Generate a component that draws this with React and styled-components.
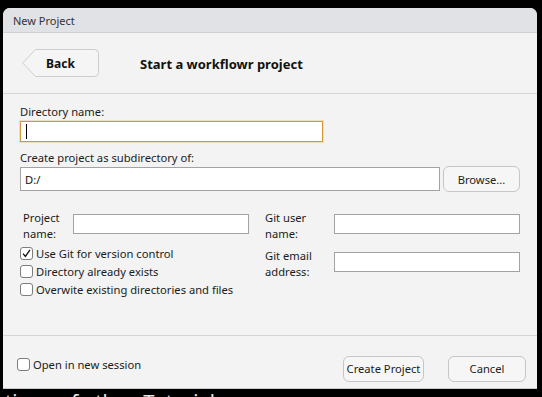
import styled, { createGlobalStyle } from 'styled-components';

const FONT = `"Segoe UI", "Noto Sans", "Liberation Sans", sans-serif`;
const TEXT = '11.2px';

const GlobalStyle = createGlobalStyle`
  html, body {
    margin: 0;
    padding: 0;
    background: #000;
  }
  body {
    font-family: ${FONT};
    overflow: hidden;
  }
`;

const Page = styled.div`
  width: 542px;
  height: 397px;
  padding: 8px 5px 0 3px;
  box-sizing: border-box;
  overflow: hidden;
`;

const Dialog = styled.div`
  width: 534px;
  height: 381px;
  background: #f2f3f2;
  border-radius: 7px 7px 0 0;
  overflow: hidden;
  display: flex;
  flex-direction: column;
  box-sizing: border-box;
  border-bottom: 1px solid #c9c9c9;
`;

const TitleBar = styled.div`
  height: 24px;
  flex: none;
  background: #e1e2e6;
  border-bottom: 1px solid #cfd0d3;
  display: flex;
  align-items: center;
  padding-left: 10px;
  font-size: 11px;
  color: #333;
`;

const Header = styled.div`
  height: 61px;
  flex: none;
  display: flex;
  align-items: center;
  padding-left: 19px;
  border-bottom: 1px solid #d4d4d4;
  box-sizing: border-box;
`;

const BackButton = styled.button`
  position: relative;
  width: 77px;
  height: 28px;
  padding: 0;
  margin: 0 41px 0 0;
  border: 0;
  background: none;
  font-family: ${FONT};
  font-size: 12px;
  font-weight: 700;
  color: #111;
  cursor: pointer;

  svg {
    position: absolute;
    inset: 0;
  }
  span {
    position: relative;
  }
`;

const Heading = styled.h1`
  margin: 2px 0 0;
  font-size: 13px;
  font-weight: 700;
  color: #111;
`;

const Body = styled.div`
  flex: 1;
  padding: 10px 17px 0;
  border-bottom: 1px solid #d4d4d4;
  display: flex;
  flex-direction: column;
`;

const Label = styled.label`
  display: block;
  font-size: ${TEXT};
  line-height: 16px;
  color: #1b1b1b;
`;

const TextBox = styled.div`
  box-sizing: border-box;
  height: ${({ h }) => h || 21}px;
  width: ${({ w }) => (w ? `${w}px` : 'auto')};
  flex: ${({ w }) => (w ? 'none' : 1)};
  background: #fff;
  border: 1px solid ${({ focused }) => (focused ? '#d39a3a' : '#a3a3a3')};
  box-shadow: ${({ focused }) => (focused ? '0 0 0 1px rgba(211,154,58,0.25)' : 'none')};
  display: flex;
  align-items: center;
  padding-left: 4px;
  font-size: ${TEXT};
  color: #111;
`;

const Caret = styled.span`
  width: 1px;
  height: 15px;
  background: #000;
  margin-left: 1px;
`;

const DirRow = styled.div`
  margin-top: 1px;
  margin-bottom: 8px;
  width: 303px;
`;

const PathRow = styled.div`
  display: flex;
  align-items: center;
  gap: 3px;
`;

const PushButton = styled.button`
  box-sizing: border-box;
  height: 26px;
  width: ${({ w }) => w}px;
  flex: none;
  border: 1px solid #c6c6c6;
  border-radius: 6px;
  background: #f6f6f6;
  font-family: ${FONT};
  font-size: ${TEXT};
  color: #222;
  padding: 0;
  white-space: nowrap;
`;

const Columns = styled.div`
  display: grid;
  grid-template-columns: 229px 255px;
  column-gap: 16px;
  margin-top: 18px;
`;

const Stack = styled.div`
  display: flex;
  flex-direction: column;
  gap: ${({ gap }) => gap || 0}px;
`;

const FieldRow = styled.div`
  display: flex;
  align-items: flex-start;
`;

const FieldLabel = styled.div`
  width: ${({ w }) => w}px;
  flex: none;
  font-size: ${TEXT};
  line-height: 16px;
  color: #1b1b1b;
  padding-left: ${({ indent }) => indent || 0}px;
  box-sizing: border-box;
`;

const FieldInput = styled(TextBox)`
  margin-top: 4px;
  height: 20px;
`;

const Checks = styled.div`
  display: flex;
  flex-direction: column;
  margin-top: 2px;
`;

const CheckRow = styled.label`
  display: flex;
  align-items: center;
  height: 18px;
  font-size: ${TEXT};
  color: #1b1b1b;
  gap: 3px;
  margin-bottom: ${({ mb }) => mb || 0}px;
  white-space: nowrap;
`;

const Box = styled.span`
  box-sizing: border-box;
  width: 13px;
  height: 13px;
  border: 1px solid #7d7d7d;
  border-radius: 3px;
  background: #fff;
  display: flex;
  align-items: center;
  justify-content: center;
  flex: none;
`;

const Footer = styled.div`
  height: 52px;
  flex: none;
  display: flex;
  align-items: center;
  padding: 13px 11px 0 14px;
  box-sizing: border-box;
`;

const Spacer = styled.div`
  flex: 1;
`;

const Buttons = styled.div`
  display: flex;
  gap: 24px;
`;

const BackdropText = styled.div`
  margin: 3px 0 0 2px;
  font-family: "Segoe UI", "Noto Sans", sans-serif;
  font-size: 20px;
  line-height: 20px;
  color: #e8e8e8;
  white-space: nowrap;
  word-spacing: 12px;
`;

const Check = ({ checked, children, mb }) => (
  <CheckRow mb={mb}>
    <Box>
      {checked && (
        <svg width="9" height="9" viewBox="0 0 9 9">
          <path d="M1 4.6 L3.4 7.4 L8 0.8" fill="none" stroke="#111" strokeWidth="1.3" />
        </svg>
      )}
    </Box>
    {children}
  </CheckRow>
);

const App = () => (
  <Page>
    <GlobalStyle />
    <Dialog>
      <TitleBar>New Project</TitleBar>
      <Header>
        <BackButton>
          <svg width="77" height="28" viewBox="0 0 77 28">
            <path
              d="M13.5 0.5 H72.5 a4 4 0 0 1 4 4 V23.5 a4 4 0 0 1 -4 4 H13.5 L0.7 14 Z"
              fill="#f5f5f6"
              stroke="#cdcdcd"
            />
          </svg>
          <span>Back</span>
        </BackButton>
        <Heading>Start a workflowr project</Heading>
      </Header>
      <Body>
        <Label>Directory name:</Label>
        <DirRow>
          <TextBox focused>
            <Caret />
          </TextBox>
        </DirRow>
        <Label>Create project as subdirectory of:</Label>
        <PathRow>
          <TextBox h={24}>D:/</TextBox>
          <PushButton w={77}>Browse...</PushButton>
        </PathRow>
        <Columns>
          <Stack>
            <FieldRow>
              <FieldLabel w={53} indent={3}>
                Project
                <br />
                name:
              </FieldLabel>
              <FieldInput w={176} />
            </FieldRow>
            <Checks>
              <Check checked>Use Git for version control</Check>
              <Check>Directory already exists</Check>
              <Check>Overwite existing directories and files</Check>
            </Checks>
          </Stack>
          <Stack gap={6}>
            <FieldRow>
              <FieldLabel w={69}>
                Git user
                <br />
                name:
              </FieldLabel>
              <FieldInput w={186} />
            </FieldRow>
            <FieldRow>
              <FieldLabel w={69}>
                Git email
                <br />
                address:
              </FieldLabel>
              <FieldInput w={186} />
            </FieldRow>
          </Stack>
        </Columns>
      </Body>
      <Footer>
        <Check mb={8}>Open in new session</Check>
        <Spacer />
        <Buttons>
          <PushButton w={81}>Create Project</PushButton>
          <PushButton w={78}>Cancel</PushButton>
        </Buttons>
      </Footer>
    </Dialog>
    <BackdropText>tion of the Tutorial</BackdropText>
  </Page>
);

export default App;
